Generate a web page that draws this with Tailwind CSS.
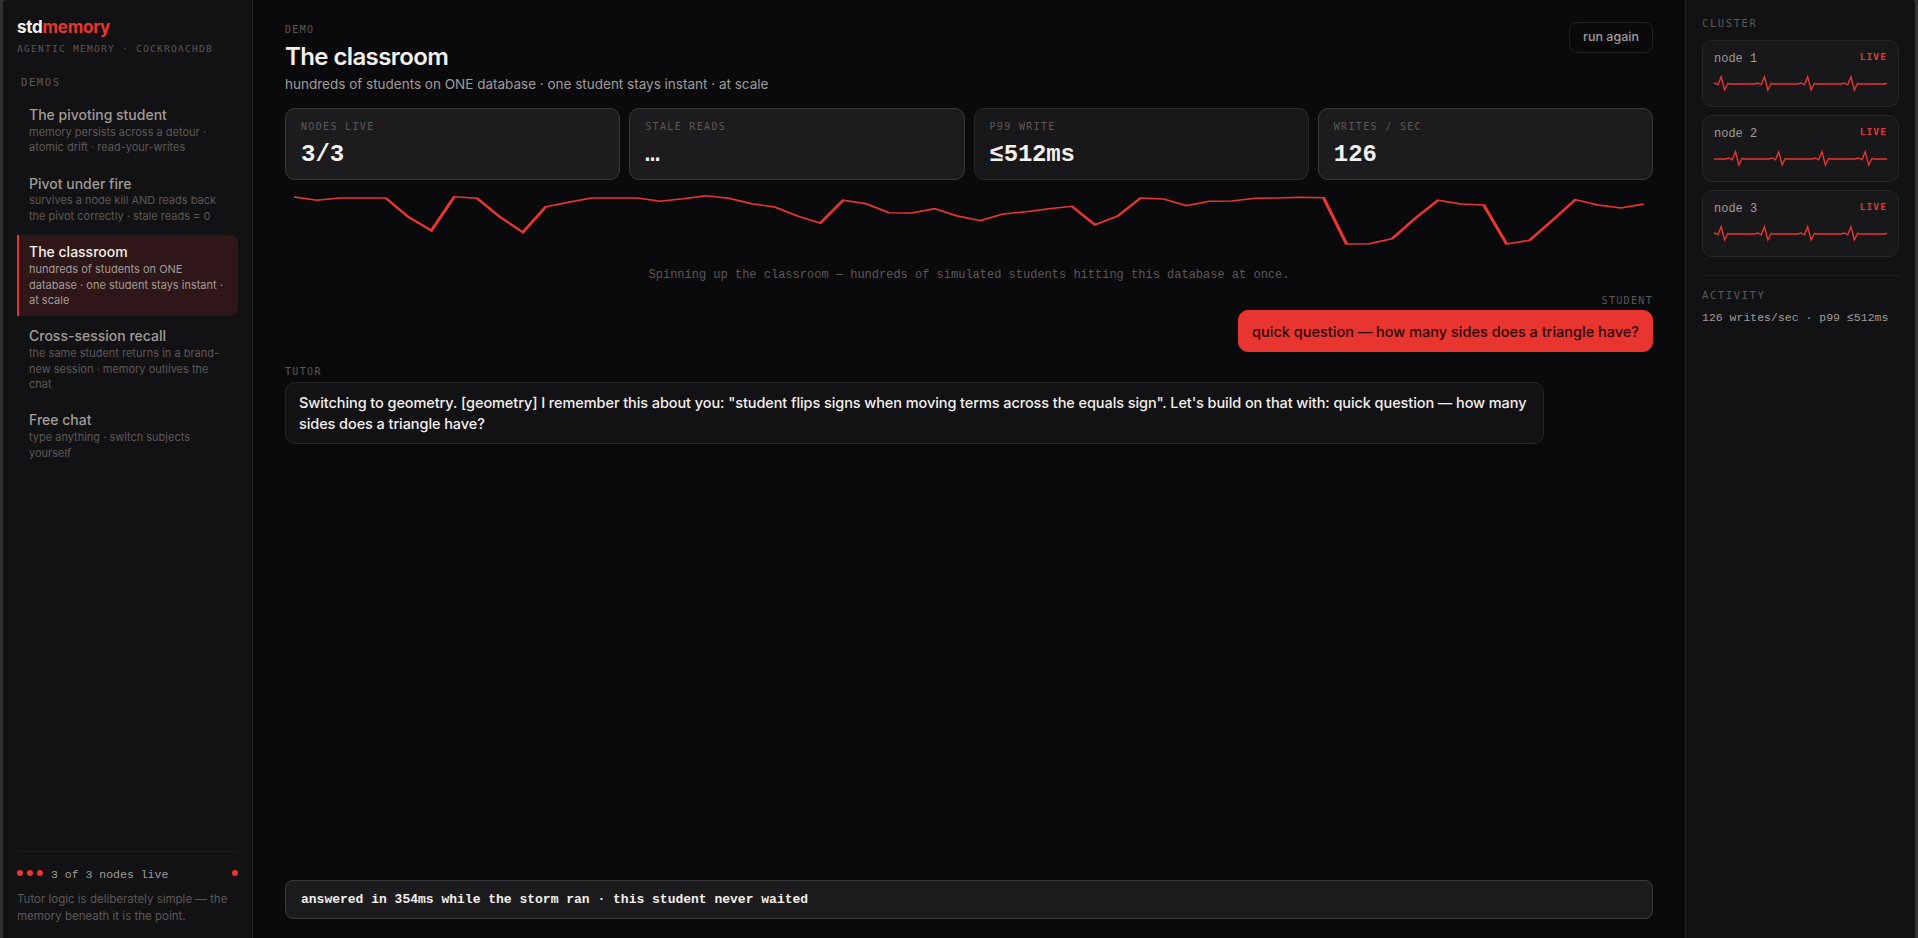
<!DOCTYPE html>
<html lang="en">
<head>
    <meta charset="UTF-8">
    <meta name="viewport" content="width=device-width, initial-scale=1.0">
    <title>stdmemory</title>
    <script src="https://cdn.jsdelivr.net/npm/@tailwindcss/browser@4"></script>
</head>
<body class="h-screen overflow-hidden bg-[#323233] px-[3px] font-['Inter',sans-serif] text-[#f3f0ed]">
    <div class="flex h-full overflow-hidden rounded-t-[4px] bg-[#0a0a0c]">

        <!-- Sidebar -->
        <aside class="flex w-[250px] shrink-0 flex-col border-r border-[#272729] bg-[#121214] px-3.5 pt-[15px] pb-[13px]">
            <div class="text-[17px] leading-6 font-bold tracking-[-0.25px]">std<span class="text-[#e8352f]">memory</span></div>
            <div class="mt-[3px] font-['DejaVu_Sans_Mono',monospace] text-[9.5px] leading-[14px] tracking-[1.28px] whitespace-nowrap text-[#5c5856]">AGENTIC MEMORY · COCKROACHDB</div>
            <div class="mt-[18px] pl-1 font-['DejaVu_Sans_Mono',monospace] text-[10.5px] leading-4 tracking-[1.6px] text-[#5c5856]">DEMOS</div>

            <nav class="mt-[7.8px] flex flex-col gap-[3px]">
                <a class="rounded-r-lg border-l-2 border-transparent px-2.5 py-2">
                    <div class="text-[14px] leading-[18.9px] font-medium text-[#a09c98]">The pivoting student</div>
                    <div class="text-[11px] leading-[15.4px] text-[#5c5856]">memory persists across a detour · atomic drift · read-your-writes</div>
                </a>
                <a class="rounded-r-lg border-l-2 border-transparent px-2.5 py-2">
                    <div class="text-[14px] leading-[18.9px] font-medium text-[#a09c98]">Pivot under fire</div>
                    <div class="text-[11px] leading-[15.4px] text-[#5c5856]">survives a node kill AND reads back the pivot correctly · stale reads = 0</div>
                </a>
                <a class="rounded-r-lg border-l-2 border-[#e8352f] bg-[#2f1618] px-2.5 py-2">
                    <div class="text-[14px] leading-[18.9px] font-medium">The classroom</div>
                    <div class="text-[11px] leading-[15.4px] text-[#a09c98]">hundreds of students on ONE database · one student stays instant · at scale</div>
                </a>
                <a class="rounded-r-lg border-l-2 border-transparent px-2.5 py-2">
                    <div class="text-[14px] leading-[18.9px] font-medium text-[#a09c98]">Cross-session recall</div>
                    <div class="text-[11px] leading-[15.4px] text-[#5c5856]">the same student returns in a brand-new session · memory outlives the chat</div>
                </a>
                <a class="rounded-r-lg border-l-2 border-transparent px-2.5 py-2">
                    <div class="text-[14px] leading-[18.9px] font-medium text-[#a09c98]">Free chat</div>
                    <div class="text-[11px] leading-[15.4px] text-[#5c5856]">type anything · switch subjects yourself</div>
                </a>
            </nav>

            <div class="mt-auto border-t border-[#202022] pt-[15px]">
                <div class="flex items-center">
                    <div class="flex gap-1 pb-1">
                        <span class="size-1.5 rounded-full bg-[#e8352f]"></span>
                        <span class="size-1.5 rounded-full bg-[#e8352f]"></span>
                        <span class="size-1.5 rounded-full bg-[#e8352f]"></span>
                    </div>
                    <span class="ml-2 font-['Liberation_Mono',monospace] text-[11.5px] leading-4 text-[#a09c98]">3 of 3 nodes live</span>
                    <span class="mb-1 ml-auto size-1.5 rounded-full bg-[#e8352f]"></span>
                </div>
                <p class="mt-2 text-[11.5px] leading-[17.25px] text-[#5c5856]">Tutor logic is deliberately simple — the memory beneath it is the point.</p>
            </div>
        </aside>

        <!-- Main column -->
        <main class="flex min-w-0 flex-1 flex-col px-8 pt-[23px] pb-5">
            <header class="flex items-start justify-between">
                <div>
                    <div class="font-['DejaVu_Sans_Mono',monospace] text-[10px] leading-[14px] tracking-[1.33px] text-[#5c5856]">DEMO</div>
                    <h1 class="mt-[5px] text-2xl leading-[30px] font-semibold tracking-[-0.6px]">The classroom</h1>
                    <p class="mt-[2px] text-[13.5px] leading-5 text-[#a09c98]">hundreds of students on ONE database · one student stays instant · at scale</p>
                </div>
                <button class="-mt-px h-[31px] w-[84px] rounded-lg border border-[#202022] text-[12.5px] font-medium text-[#a09c98]">run again</button>
            </header>

            <section class="mt-3.5 grid grid-cols-4 gap-[9px]">
                <div class="h-[72px] rounded-[10px] border border-[#3a3a3c] bg-[#1c1c1e] px-[15px] pt-[11px]">
                    <div class="font-['DejaVu_Sans_Mono',monospace] text-[10px] leading-[14px] tracking-[1.33px] text-[#5c5856]">NODES LIVE</div>
                    <div class="mt-[5px] font-['Liberation_Mono',monospace] text-2xl leading-8 font-bold">3/3</div>
                </div>
                <div class="h-[72px] rounded-[10px] border border-[#3a3a3c] bg-[#1c1c1e] px-[15px] pt-[11px]">
                    <div class="font-['DejaVu_Sans_Mono',monospace] text-[10px] leading-[14px] tracking-[1.33px] text-[#5c5856]">STALE READS</div>
                    <div class="mt-[5px] font-['Liberation_Mono',monospace] text-2xl leading-8 font-bold">…</div>
                </div>
                <div class="h-[72px] rounded-[10px] border border-[#2a2a2c] bg-[#18181a] px-[15px] pt-[11px]">
                    <div class="font-['DejaVu_Sans_Mono',monospace] text-[10px] leading-[14px] tracking-[1.33px] text-[#5c5856]">P99 WRITE</div>
                    <div class="mt-[5px] font-['Liberation_Mono',monospace] text-2xl leading-8 font-bold tracking-[-0.2px]">≤512ms</div>
                </div>
                <div class="h-[72px] rounded-[10px] border border-[#3a3a3c] bg-[#1c1c1e] px-[15px] pt-[11px]">
                    <div class="font-['DejaVu_Sans_Mono',monospace] text-[10px] leading-[14px] tracking-[1.33px] text-[#5c5856]">WRITES / SEC</div>
                    <div class="mt-[5px] font-['Liberation_Mono',monospace] text-2xl leading-8 font-bold">126</div>
                </div>
            </section>

            <!-- Write throughput -->
            <svg class="mt-3 h-14 w-full shrink-0" viewBox="0 0 600 56" preserveAspectRatio="none" fill="none">
                <polyline id="throughput" stroke="#e8352f" stroke-width="1.5"></polyline>
            </svg>

            <div class="mt-[18px] text-center font-['Liberation_Mono',monospace] text-[12px] leading-[18px] text-[#5c5856]">Spinning up the classroom — hundreds of simulated students hitting this database at once.</div>

            <div class="mt-2.5 flex flex-col items-end">
                <div class="font-['DejaVu_Sans_Mono',monospace] text-[10px] leading-[14px] tracking-[1.33px] text-[#5c5856]">STUDENT</div>
                <div class="mt-[2px] rounded-[10px] border border-[#e8352f] bg-[#e8352f] px-[13px] py-[9.5px] text-[14.5px] leading-[1.45] font-medium text-[#2a0807]">quick question — how many sides does a triangle have?</div>
            </div>
            <div class="mt-[12.5px] flex flex-col items-start">
                <div class="font-['DejaVu_Sans_Mono',monospace] text-[10px] leading-[14px] tracking-[1.33px] text-[#5c5856]">TUTOR</div>
                <div class="mt-[3px] max-w-[92%] rounded-[10px] border border-[#272729] bg-[#121214] py-[9px] pr-2 pl-[13px] text-[14.5px] leading-[1.45] font-medium tracking-[-0.083px]">Switching to geometry. [geometry] I remember this about you: "student flips signs when moving terms across the equals sign". Let's build on that with: quick question — how many sides does a triangle have?</div>
            </div>

            <div class="mt-auto -mb-px rounded-lg border border-[#3a3a3c] bg-[#1c1c1e] px-[15px] py-[9px] font-['Liberation_Mono',monospace] text-[13px] leading-[19px] font-bold">answered in 354ms while the storm ran · this student never waited</div>
        </main>

        <!-- Cluster panel -->
        <aside class="w-[230px] shrink-0 border-l border-[#272729] bg-[#121214] px-4 pt-[15px]">
            <div class="font-['DejaVu_Sans_Mono',monospace] text-[10.5px] leading-4 tracking-[1.6px] text-[#5c5856]">CLUSTER</div>
            <div class="mt-[9px] flex flex-col gap-2">
                <div class="h-[67px] rounded-[10px] border border-[#272729] bg-[#18181a] px-[11px] pt-[9px]">
                    <div class="flex items-start justify-between font-['Liberation_Mono',monospace]">
                        <span class="text-[12px] leading-[18px] text-[#a09c98]">node 1</span>
                        <span class="font-['DejaVu_Sans_Mono',monospace] text-[9.5px] leading-[14px] font-bold tracking-[1.1px] text-[#e8352f]">LIVE</span>
                    </div>
                    <svg class="mt-1 block h-6 w-full" viewBox="0 0 173 24" preserveAspectRatio="none" fill="none">
                        <polyline class="pulse" data-start="7.2" stroke="#e8352f" stroke-width="1.4"></polyline>
                    </svg>
                </div>
                <div class="h-[67px] rounded-[10px] border border-[#272729] bg-[#18181a] px-[11px] pt-[9px]">
                    <div class="flex items-start justify-between font-['Liberation_Mono',monospace]">
                        <span class="text-[12px] leading-[18px] text-[#a09c98]">node 2</span>
                        <span class="font-['DejaVu_Sans_Mono',monospace] text-[9.5px] leading-[14px] font-bold tracking-[1.1px] text-[#e8352f]">LIVE</span>
                    </div>
                    <svg class="mt-1 block h-6 w-full" viewBox="0 0 173 24" preserveAspectRatio="none" fill="none">
                        <polyline class="pulse" data-start="21.5" stroke="#e8352f" stroke-width="1.4"></polyline>
                    </svg>
                </div>
                <div class="h-[67px] rounded-[10px] border border-[#272729] bg-[#18181a] px-[11px] pt-[9px]">
                    <div class="flex items-start justify-between font-['Liberation_Mono',monospace]">
                        <span class="text-[12px] leading-[18px] text-[#a09c98]">node 3</span>
                        <span class="font-['DejaVu_Sans_Mono',monospace] text-[9.5px] leading-[14px] font-bold tracking-[1.1px] text-[#e8352f]">LIVE</span>
                    </div>
                    <svg class="mt-1 block h-6 w-full" viewBox="0 0 173 24" preserveAspectRatio="none" fill="none">
                        <polyline class="pulse" data-start="7.2" stroke="#e8352f" stroke-width="1.4"></polyline>
                    </svg>
                </div>
            </div>
            <div class="mt-[18px] border-t border-[#202022] pt-[11px]">
                <div class="font-['DejaVu_Sans_Mono',monospace] text-[10.5px] leading-4 tracking-[1.6px] text-[#5c5856]">ACTIVITY</div>
                <div class="mt-1.5 font-['Liberation_Mono',monospace] text-[11.5px] leading-[18px] whitespace-nowrap text-[#a09c98]">126 writes/sec · p99 ≤512ms</div>
            </div>
        </aside>
    </div>

    <script>
        // Throughput samples, y inside the 56px chart
        const samples = [5, 8.2, 6, 6, 6, 25, 38.5, 4.8, 6.3, 25, 40.3, 14.7, 10.3, 6, 6, 6, 9.3, 6.7, 3.7, 6.3,
            11.7, 15, 24, 31, 8.3, 11.7, 20.7, 21, 16.7, 24, 28.7, 22, 19.7, 16.7, 14.3, 32.7, 24, 6, 7, 13.7,
            9.3, 9, 6.3, 6, 5.2, 5.8, 52, 51.7, 46.7, 26.3, 8.3, 12, 13, 52, 48.3, 28.3, 7.7, 13, 16, 12];
        document.getElementById('throughput').setAttribute('points',
            samples.map((y, i) => (4 + i * 592 / 59).toFixed(2) + ',' + y).join(' '));

        // Heartbeat: four beats per trace, one every 43.25px
        const beat = [[-10, 12], [-6.7, 11], [-3.3, 12.8], [0, 4.8], [3.4, 18], [6.7, 11.3], [8.5, 12]];
        document.querySelectorAll('.pulse').forEach(line => {
            const start = parseFloat(line.dataset.start);
            const points = [];
            for (let i = -1; i < 5; i++) {
                beat.forEach(([x, y]) => points.push((start + i * 43.25 + x).toFixed(2) + ',' + y));
            }
            line.setAttribute('points', points.join(' '));
        });
    </script>
</body>
</html>
